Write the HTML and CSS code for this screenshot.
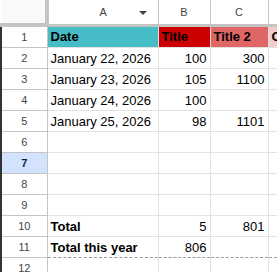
FILE: index.html
```html
<!DOCTYPE html>
<html lang="en">
<head>
    <meta charset="UTF-8">
    <meta name="viewport" content="width=device-width, initial-scale=1.0">
    <title>Sheet</title>
    <link rel="stylesheet" href="styles.css">
</head>
<body>
    <table class="sheet">
        <colgroup>
            <col class="col-rh">
            <col class="col-a">
            <col class="col-b">
            <col class="col-c">
            <col class="col-d">
        </colgroup>
        <thead>
            <tr>
                <th class="corner"></th>
                <th class="colhead colhead-a">A<span class="menu-arrow"></span></th>
                <th class="colhead">B</th>
                <th class="colhead">C</th>
                <th class="colhead"></th>
            </tr>
        </thead>
        <tbody>
            <tr class="head-row">
                <th class="rowhead">1</th>
                <td class="bold teal">Date</td>
                <td class="bold red">Title</td>
                <td class="bold salmon">Title 2</td>
                <td class="bold pink">Column</td>
            </tr>
            <tr>
                <th class="rowhead">2</th>
                <td>January 22, 2026</td>
                <td class="num">100</td>
                <td class="num">300</td>
                <td></td>
            </tr>
            <tr>
                <th class="rowhead">3</th>
                <td>January 23, 2026</td>
                <td class="num">105</td>
                <td class="num">1100</td>
                <td></td>
            </tr>
            <tr>
                <th class="rowhead">4</th>
                <td>January 24, 2026</td>
                <td class="num">100</td>
                <td class="num"></td>
                <td></td>
            </tr>
            <tr>
                <th class="rowhead">5</th>
                <td>January 25, 2026</td>
                <td class="num">98</td>
                <td class="num">1101</td>
                <td></td>
            </tr>
            <tr>
                <th class="rowhead">6</th>
                <td></td><td></td><td></td><td></td>
            </tr>
            <tr>
                <th class="rowhead active">7</th>
                <td></td><td></td><td></td><td></td>
            </tr>
            <tr>
                <th class="rowhead">8</th>
                <td></td><td></td><td></td><td></td>
            </tr>
            <tr>
                <th class="rowhead">9</th>
                <td></td><td></td><td></td><td></td>
            </tr>
            <tr>
                <th class="rowhead">10</th>
                <td class="bold">Total</td>
                <td class="num">5</td>
                <td class="num">801</td>
                <td></td>
            </tr>
            <tr class="copied">
                <th class="rowhead">11</th>
                <td class="bold">Total this year</td>
                <td class="num">806</td>
                <td class="num"></td>
                <td></td>
            </tr>
            <tr class="after-copied">
                <th class="rowhead">12</th>
                <td></td><td></td><td></td><td></td>
            </tr>
        </tbody>
    </table>
</body>
</html>
```

FILE: styles.css
```css
body {
    margin: 0;
    background: #fff;
    font-family: "Liberation Sans", Arial, sans-serif;
    overflow: hidden;
}
.sheet {
    border-collapse: collapse;
    table-layout: fixed;
    width: 340px;
}
.col-rh { width: 46px; }
.col-a { width: 111px; }
.col-b { width: 52px; }
.col-c { width: 58px; }
.col-d { width: 73px; }

th, td {
    height: 20px;
    padding: 0 3px;
    border: 1px solid #e2e2e2;
    font-size: 13px;
    color: #000;
    white-space: nowrap;
    overflow: hidden;
    text-align: left;
}
.corner {
    height: 23px;
    background: #f8f9fa;
    border: none;
    border-right: 4px solid #c4c4c4;
    border-bottom: 4px solid #c4c4c4;
}
.colhead {
    height: 23px;
    position: relative;
    background: #fff;
    border-top: none;
    border-left: 1px solid #c4c4c4;
    border-right: 1px solid #c4c4c4;
    border-bottom: 3px solid #c4c4c4;
    color: #444;
    font-size: 11px;
    font-weight: normal;
    text-align: center;
}
.menu-arrow {
    position: absolute;
    right: 11px;
    top: 11px;
    border-left: 4px solid transparent;
    border-right: 4px solid transparent;
    border-top: 4px solid #444;
}
.rowhead {
    padding: 0;
    background: #fff;
    border-left: 2px solid #333;
    border-right: 1px solid #c4c4c4;
    border-bottom: 1px solid #c4c4c4;
    color: #444;
    font-size: 11px;
    font-weight: normal;
    text-align: center;
}
.rowhead.active {
    background: #d3e3fd;
    color: #0b1f40;
    font-weight: bold;
}
.bold { font-weight: bold; }
.num { text-align: right; }
.teal { background: #46bdc6; }
.red { background: #cc0000; }
.salmon { background: #e06666; }
.pink { background: #f4cccc; }
.copied td { border-bottom: 1px dashed #9a9a9a; }
.after-copied td { border-top: none; }
```
